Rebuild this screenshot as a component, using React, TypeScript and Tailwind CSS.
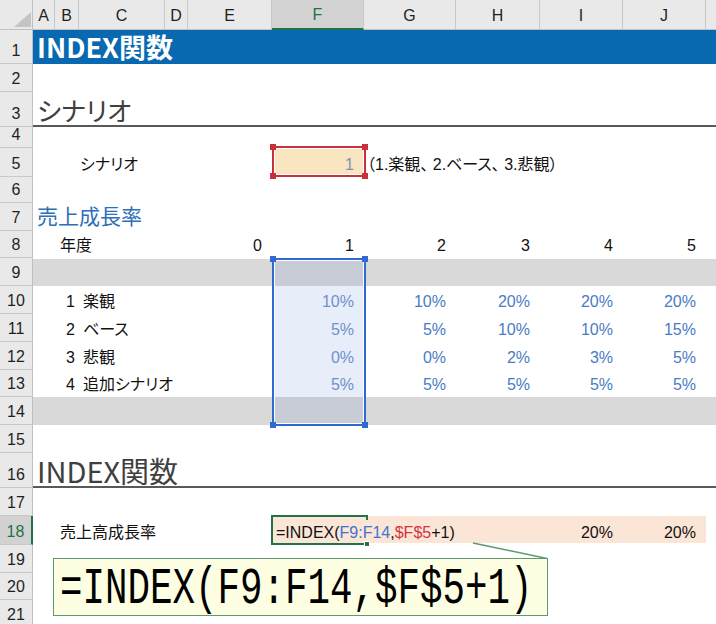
import type { ReactNode } from "react";

const W: Record<string, string> = {
  A: "w-[22px]",
  B: "w-[24px]",
  C: "w-[86px]",
  D: "w-[23px]",
  E: "w-[84px]",
  F: "w-[92px]",
  G: "w-[92px]",
  H: "w-[84px]",
  I: "w-[83px]",
  J: "w-[83px]",
};

const COLS = ["A", "B", "C", "D", "E", "F", "G", "H", "I", "J"];

const SCENARIOS = [
  { no: 1, label: "楽観", values: ["10%", "10%", "20%", "20%", "20%"] },
  { no: 2, label: "ベース", values: ["5%", "5%", "10%", "10%", "15%"] },
  { no: 3, label: "悲観", values: ["0%", "0%", "2%", "3%", "5%"] },
  { no: 4, label: "追加シナリオ", values: ["5%", "5%", "5%", "5%", "5%"] },
];

function Row({
  n,
  h,
  active,
  className,
  children,
}: {
  n: number;
  h: string;
  active?: boolean;
  className?: string;
  children?: ReactNode;
}) {
  return (
    <div className={`flex ${h}`}>
      <div
        className={`w-[33px] shrink-0 flex items-end justify-center pb-[3px] leading-[18px] border-b border-b-[#c8c8c8] ${
          active
            ? "bg-[#d2d2d2] text-[#217346] border-r-2 border-r-[#217346]"
            : "bg-[#e9e9e9] text-[#1f1f1f] border-r border-r-[#c0c0c0]"
        }`}
      >
        {n}
      </div>
      <div className={`flex-1 flex min-w-0 ${className ?? ""}`}>{children}</div>
    </div>
  );
}

function Cell({
  col,
  right,
  className,
  children,
}: {
  col: string;
  right?: boolean;
  className?: string;
  children?: ReactNode;
}) {
  return (
    <div
      className={`${W[col]} shrink-0 flex items-end pb-[3px] leading-[18px] whitespace-nowrap ${
        right ? "justify-end pr-[10px]" : ""
      } ${className ?? ""}`}
    >
      {children}
    </div>
  );
}

function Handle({ className }: { className: string }) {
  return <div className={`absolute w-[6px] h-[6px] ${className}`} />;
}

export default function App() {
  return (
    <div className="relative w-[716px] h-[624px] overflow-hidden bg-white text-[16px] text-[#111] font-['Liberation_Sans','Noto_Sans_CJK_JP',sans-serif] [font-feature-settings:'palt']">
      {/* column headers */}
      <div className="flex h-[30px]">
        <div className="relative w-[33px] shrink-0 bg-[#e9e9e9] border-r border-b border-[#c0c0c0]">
          <svg className="absolute right-[1px] bottom-[2px]" width="17" height="15" viewBox="0 0 17 15">
            <polygon points="17,0 17,15 0,15" fill="#c4c4c4" />
          </svg>
        </div>
        {COLS.map((c) => (
          <div
            key={c}
            className={`${W[c]} shrink-0 flex items-end justify-center pb-[4px] leading-[18px] border-r border-r-[#c8c8c8] ${
              c === "F"
                ? "bg-[#d3d3d3] text-[#217346] border-b-2 border-b-[#217346]"
                : "bg-[#e9e9e9] text-[#1f1f1f] border-b border-b-[#c0c0c0]"
            }`}
          >
            {c}
          </div>
        ))}
        <div className="flex-1 bg-[#e9e9e9] border-b border-[#c0c0c0]" />
      </div>

      <Row n={1} h="h-[34px]" className="bg-[#0869b1]">
        <div className="pl-[4px] flex items-end pb-[1px] text-white font-bold text-[27px] leading-[32px] whitespace-nowrap font-['Noto_Sans_CJK_JP',sans-serif]">
          INDEX関数
        </div>
      </Row>
      <Row n={2} h="h-[28px]" />
      <Row n={3} h="h-[35px]" className="border-b-2 border-[#595959]">
        <div className="pl-[4px] flex items-end text-[#404040] text-[26px] leading-[30px] whitespace-nowrap font-['Noto_Sans_CJK_JP',sans-serif]">
          シナリオ
        </div>
      </Row>
      <Row n={4} h="h-[21px]" />
      <Row n={5} h="h-[29px]">
        <Cell col="A" />
        <Cell col="B" />
        <Cell col="C" className="pl-[1px]">シナリオ</Cell>
        <Cell col="D" />
        <Cell col="E" />
        <Cell col="F" right className="bg-[#f9e5bf] text-[#8790b5]">
          1
        </Cell>
        <Cell col="G" className="pl-[3px]">（1.楽観、 2.ベース、 3.悲観）</Cell>
      </Row>
      <Row n={6} h="h-[26px]" />
      <Row n={7} h="h-[28px]">
        <div className="pl-[4px] flex items-end pb-[2px] text-[#2e6fb7] text-[21px] leading-[24px] whitespace-nowrap">
          売上成長率
        </div>
      </Row>
      <Row n={8} h="h-[27px]">
        <Cell col="A" />
        <Cell col="B" className="pl-[5px]">年度</Cell>
        <Cell col="C" />
        <Cell col="D" />
        <Cell col="E" right>0</Cell>
        <Cell col="F" right>1</Cell>
        <Cell col="G" right>2</Cell>
        <Cell col="H" right>3</Cell>
        <Cell col="I" right>4</Cell>
        <Cell col="J" right>5</Cell>
      </Row>
      <Row n={9} h="h-[28px]" className="bg-[#d9d9d9] border-t border-white">
        <Cell col="A" />
        <Cell col="B" />
        <Cell col="C" />
        <Cell col="D" />
        <Cell col="E" />
        <Cell col="F" className="bg-[#c7ccd6]" />
      </Row>
      {SCENARIOS.map((s, i) => (
        <Row key={s.no} n={10 + i} h={i === 3 ? "h-[27px]" : "h-[28px]"}>
          <Cell col="A" />
          <Cell col="B" right className="!pr-[4px]">
            {s.no}
          </Cell>
          <Cell col="C" className="pl-[4px]">{s.label}</Cell>
          <Cell col="D" />
          <Cell col="E" />
          <Cell col="F" right className="bg-[#e7eef9] text-[#7090cb]">
            {s.values[0]}
          </Cell>
          <Cell col="G" right className="text-[#4a7bc6]">{s.values[1]}</Cell>
          <Cell col="H" right className="text-[#4a7bc6]">{s.values[2]}</Cell>
          <Cell col="I" right className="text-[#4a7bc6]">{s.values[3]}</Cell>
          <Cell col="J" right className="text-[#4a7bc6]">{s.values[4]}</Cell>
        </Row>
      ))}
      <Row n={14} h="h-[28px]" className="bg-[#d9d9d9]">
        <Cell col="A" />
        <Cell col="B" />
        <Cell col="C" />
        <Cell col="D" />
        <Cell col="E" />
        <Cell col="F" className="bg-[#c7ccd6]" />
      </Row>
      <Row n={15} h="h-[28px]" />
      <Row n={16} h="h-[35px]" className="border-b-2 border-[#595959]">
        <div className="pl-[4px] flex items-end text-[#404040] text-[29px] leading-[32px] whitespace-nowrap font-['Noto_Sans_CJK_JP',sans-serif]">
          INDEX関数
        </div>
      </Row>
      <Row n={17} h="h-[28px]" />
      <Row n={18} h="h-[29px]" active>
        <Cell col="A" />
        <Cell col="B" className="pl-[5px]">売上高成長率</Cell>
        <Cell col="C" />
        <Cell col="D" />
        <Cell col="E" />
        <div className="flex bg-[#fbe5d6] mb-[2px]">
          <Cell col="F" className="pl-[4px] !pb-[1px]">
            <span>=INDEX(</span>
            <span className="text-[#3f74cf]">F9:F14</span>
            <span>,</span>
            <span className="text-[#d2353f]">$F$5</span>
            <span>+1)</span>
            <span className="inline-block w-px h-[19px] bg-[#222] ml-[2px] self-end" />
          </Cell>
          <Cell col="G" />
          <Cell col="H" />
          <Cell col="I" right className="!pb-[1px]">20%</Cell>
          <Cell col="J" right className="!pb-[1px]">20%</Cell>
        </div>
      </Row>
      <Row n={19} h="h-[28px]" />
      <Row n={20} h="h-[27px]" />
      <Row n={21} h="h-[28px]" />

      {/* F5 precedent highlight */}
      <div className="absolute left-[272px] top-[146px] w-[94px] h-[31px] border-2 border-[#c8303d] shadow-[inset_0_0_0_1px_white]">
        <Handle className="-left-[4px] -top-[4px] bg-[#c8303d]" />
        <Handle className="-right-[4px] -top-[4px] bg-[#c8303d]" />
        <Handle className="-left-[4px] -bottom-[4px] bg-[#c8303d]" />
        <Handle className="-right-[4px] -bottom-[4px] bg-[#c8303d]" />
      </div>

      {/* F9:F14 range highlight */}
      <div className="absolute left-[272px] top-[258px] w-[94px] h-[168px] border-2 border-[#3069d0] shadow-[inset_0_0_0_1px_white]">
        <Handle className="-left-[4px] -top-[4px] bg-[#3069d0]" />
        <Handle className="-right-[4px] -top-[4px] bg-[#3069d0]" />
        <Handle className="-left-[4px] -bottom-[4px] bg-[#3069d0]" />
        <Handle className="-right-[4px] -bottom-[4px] bg-[#3069d0]" />
      </div>

      {/* active cell F18 */}
      <div className="absolute left-[271px] top-[515px] w-[95px] h-[30px] border-2 border-r-0 border-[#217346]">
        <div className="absolute -right-[2px] -top-[2px] w-[2px] h-[5px] bg-[#217346]" />
        <div className="absolute -right-[4px] -bottom-[4px] w-[6px] h-[6px] bg-[#217346] border border-white" />
      </div>

      {/* callout */}
      <svg className="absolute left-0 top-0 pointer-events-none" width="716" height="624">
        <line x1="473" y1="543" x2="547" y2="558.5" stroke="#5b9b72" strokeWidth="1.5" />
      </svg>
      <div className="absolute left-[53px] top-[558px] w-[495px] h-[58px] bg-[#fefee3] border-[1.5px] border-[#5b9b72] flex items-center pl-[6px]">
        <span className="text-[37.5px] leading-none text-black whitespace-nowrap font-['Liberation_Mono',monospace] scale-y-[1.4] translate-y-[3px] [font-feature-settings:normal]">
          =INDEX(F9:F14,$F$5+1)
        </span>
      </div>
    </div>
  );
}
